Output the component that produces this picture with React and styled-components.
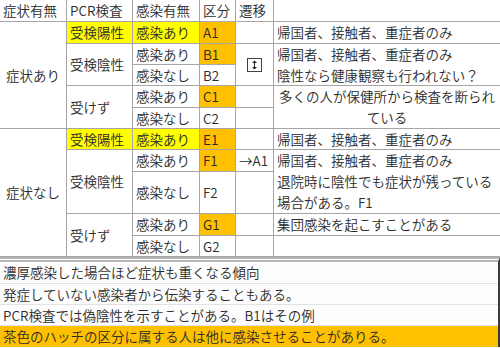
import React from "react";
import styled, { createGlobalStyle } from "styled-components";

const GlobalStyle = createGlobalStyle`
  html, body {
    margin: 0;
    padding: 0;
    background: #ffffff;
  }
  body {
    font-family: "Noto Sans CJK JP", "Noto Sans", sans-serif;
    font-size: 13.5px;
    font-weight: 350;
    color: #2b2b2b;
  }
`;

const colors = {
  line: "#a6a6a6",
  yellow: "#ffff00",
  orange: "#ffc000",
};

const Page = styled.div`
  width: 500px;
  height: 348px;
  overflow: hidden;
`;

const Sheet = styled.div`
  display: grid;
  grid-template-columns: 67px 66px 67px 36px 38px 226px;
  grid-template-rows: 22px 22px 21px 21px 22px 21px 21px 22px 42px 22px 21px;
`;

const Cell = styled.div`
  grid-column: ${(p) => p.$col} / span ${(p) => p.$colSpan || 1};
  grid-row: ${(p) => p.$row} / span ${(p) => p.$rowSpan || 1};
  box-sizing: border-box;
  border-right: ${(p) => (p.$noRight ? "none" : `1px solid ${colors.line}`)};
  border-bottom: 1px solid ${colors.line};
  background: ${(p) => p.$bg || "transparent"};
  display: flex;
  flex-direction: column;
  justify-content: ${(p) => (p.$top ? "flex-start" : "center")};
  align-items: ${(p) => (p.$center ? "center" : "flex-start")};
  padding: 0 3px;
  line-height: 21px;
  white-space: nowrap;
  overflow: hidden;
`;

const Note = styled.div`
  text-align: ${(p) => (p.$center ? "center" : "left")};
  width: 100%;
`;

const SwapButton = styled.div`
  width: 15px;
  height: 14px;
  box-sizing: border-box;
  border: 1px solid #404040;
  background: #fff;
  display: flex;
  align-items: center;
  justify-content: center;
  margin-left: 8px;
`;

const Notes = styled.div`
  border-top: 5px double #b4b4b4;
  border-right: 2px solid #3a3a3a;
  box-sizing: border-box;
  width: 500px;
  background: #fdfdfd;
`;

const NoteRow = styled.div`
  height: ${(p) => p.$h}px;
  box-sizing: border-box;
  border-bottom: 1px solid ${(p) => (p.$last ? "transparent" : "#e2e2e2")};
  background: ${(p) => p.$bg || "transparent"};
  padding: 0 3px;
  line-height: ${(p) => p.$h - 1}px;
  white-space: nowrap;
  overflow: hidden;
`;

const UpDown = () => (
  <svg width="7" height="10" viewBox="0 0 7 10">
    <path d="M3.5 0.5 L6 3 H1 Z M3.5 9.5 L6 7 H1 Z" fill="#222" />
    <rect x="3" y="2.5" width="1" height="5" fill="#222" />
  </svg>
);

const groups = [
  {
    label: "症状あり",
    start: 2,
    rows: [
      { pcr: "受検陽性", pcrSpan: 1, hit: true, inf: "感染あり", code: "A1" },
      { pcr: "受検陰性", pcrSpan: 2, inf: "感染あり", code: "B1" },
      { inf: "感染なし", code: "B2" },
      { pcr: "受けず", pcrSpan: 2, inf: "感染あり", code: "C1" },
      { inf: "感染なし", code: "C2" },
    ],
  },
  {
    label: "症状なし",
    start: 7,
    rows: [
      { pcr: "受検陽性", pcrSpan: 1, hit: true, inf: "感染あり", code: "E1" },
      { pcr: "受検陰性", pcrSpan: 2, inf: "感染あり", code: "F1" },
      { inf: "感染なし", code: "F2" },
      { pcr: "受けず", pcrSpan: 2, inf: "感染あり", code: "G1" },
      { inf: "感染なし", code: "G2" },
    ],
  },
];

export default function App() {
  return (
    <Page>
      <GlobalStyle />
      <Sheet>
        <Cell $col={1} $row={1}>症状有無</Cell>
        <Cell $col={2} $row={1}>PCR検査</Cell>
        <Cell $col={3} $row={1}>感染有無</Cell>
        <Cell $col={4} $row={1}>区分</Cell>
        <Cell $col={5} $row={1}>遷移</Cell>
        <Cell $col={6} $row={1} $noRight />

        {groups.map((g) => (
          <React.Fragment key={g.label}>
            <Cell $col={1} $row={g.start} $rowSpan={5} $center>
              {g.label}
            </Cell>
            {g.rows.map((r, i) => (
              <React.Fragment key={r.code}>
                {r.pcr && (
                  <Cell
                    $col={2}
                    $row={g.start + i}
                    $rowSpan={r.pcrSpan}
                    $bg={r.hit ? colors.yellow : undefined}
                  >
                    {r.pcr}
                  </Cell>
                )}
                <Cell
                  $col={3}
                  $row={g.start + i}
                  $bg={r.hit ? colors.yellow : undefined}
                >
                  {r.inf}
                </Cell>
                <Cell
                  $col={4}
                  $row={g.start + i}
                  $bg={r.code.endsWith("1") ? colors.orange : undefined}
                >
                  {r.code}
                </Cell>
              </React.Fragment>
            ))}
          </React.Fragment>
        ))}

        {/* 遷移 column */}
        <Cell $col={5} $row={2} />
        <Cell $col={5} $row={3} $rowSpan={2}>
          <SwapButton>
            <UpDown />
          </SwapButton>
        </Cell>
        <Cell $col={5} $row={5} />
        <Cell $col={5} $row={6} />
        <Cell $col={5} $row={7} />
        <Cell $col={5} $row={8}>→A1</Cell>
        <Cell $col={5} $row={9} />
        <Cell $col={5} $row={10} />
        <Cell $col={5} $row={11} />

        {/* comments */}
        <Cell $col={6} $row={2} $noRight>帰国者、接触者、重症者のみ</Cell>
        <Cell $col={6} $row={3} $rowSpan={2} $noRight $top>
          <Note>帰国者、接触者、重症者のみ</Note>
          <Note>陰性なら健康観察も行われない？</Note>
        </Cell>
        <Cell $col={6} $row={5} $rowSpan={2} $noRight $center>
          <Note $center>多くの人が保健所から検査を断られ</Note>
          <Note $center>ている</Note>
        </Cell>
        <Cell $col={6} $row={7} $noRight>帰国者、接触者、重症者のみ</Cell>
        <Cell $col={6} $row={8} $rowSpan={2} $noRight $top>
          <Note>帰国者、接触者、重症者のみ</Note>
          <Note>退院時に陰性でも症状が残っている</Note>
          <Note>場合がある。F1</Note>
        </Cell>
        <Cell $col={6} $row={10} $noRight>集団感染を起こすことがある</Cell>
        <Cell $col={6} $row={11} $noRight />
      </Sheet>

      <Notes>
        <NoteRow $h={22}>濃厚感染した場合ほど症状も重くなる傾向</NoteRow>
        <NoteRow $h={21}>発症していない感染者から伝染することもある。</NoteRow>
        <NoteRow $h={21}>PCR検査では偽陰性を示すことがある。B1はその例</NoteRow>
        <NoteRow $h={21} $bg={colors.orange} $last>
          茶色のハッチの区分に属する人は他に感染させることがありる。
        </NoteRow>
      </Notes>
    </Page>
  );
}
